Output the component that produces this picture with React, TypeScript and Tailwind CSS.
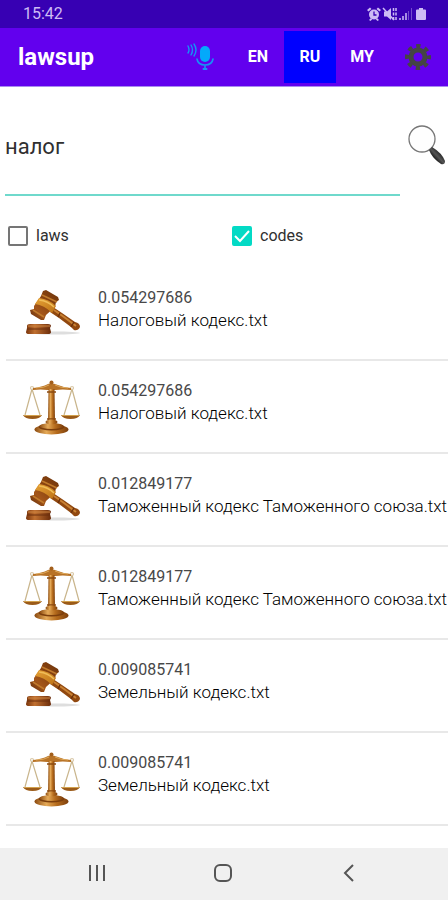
import React, { useState } from "react";

type Result = {
  id: number;
  score: string;
  title: string;
  icon: "gavel" | "scales";
};

const results: Result[] = [
  { id: 1, score: "0.054297686", title: "Налоговый кодекс.txt", icon: "gavel" },
  { id: 2, score: "0.054297686", title: "Налоговый кодекс.txt", icon: "scales" },
  { id: 3, score: "0.012849177", title: "Таможенный кодекс Таможенного союза.txt", icon: "gavel" },
  { id: 4, score: "0.012849177", title: "Таможенный кодекс Таможенного союза.txt", icon: "scales" },
  { id: 5, score: "0.009085741", title: "Земельный кодекс.txt", icon: "gavel" },
  { id: 6, score: "0.009085741", title: "Земельный кодекс.txt", icon: "scales" },
];

const languages = ["EN", "RU", "MY"];

const Gavel = () => (
  <svg viewBox="0 2 60 60" className="size-15 shrink-0" aria-hidden="true">
    <defs>
      <linearGradient id="head" x1="0" y1="1" x2="1" y2="0">
        <stop offset="0" stopColor="#5c2808" />
        <stop offset="0.3" stopColor="#a4561a" />
        <stop offset="0.6" stopColor="#8a430f" />
        <stop offset="1" stopColor="#6b340c" />
      </linearGradient>
      <linearGradient id="band" x1="0" y1="0" x2="1" y2="1">
        <stop offset="0" stopColor="#e5a136" />
        <stop offset="1" stopColor="#bd7216" />
      </linearGradient>
      <linearGradient id="block" x1="0" y1="0" x2="1" y2="0">
        <stop offset="0" stopColor="#7a350c" />
        <stop offset="0.35" stopColor="#c07030" />
        <stop offset="1" stopColor="#6b2c0a" />
      </linearGradient>
    </defs>
    <ellipse cx="32" cy="51" rx="26" ry="1.5" fill="#dedede" />
    <path d="M5 44Q5 42 8 42H26Q29 42 29 44L28 46L29 50Q29 52 26 52H7Q4 52 4 50L5 46Z" fill="url(#block)" />
    <path d="M6 44H28" stroke="#cf8743" strokeWidth="1" />
    <path d="M5 47H28" stroke="#6a2f0c" strokeWidth="1" />
    <path d="M31 25L40 31L53 40Q58 41 58 45Q56 49 52 48L49 45L37 36L28 30Z" fill="#91480f" />
    <path d="M32 28L42 35L54 44" stroke="#c88133" strokeWidth="2" fill="none" />
    <path d="M38 31L36 35M52 40L49 45" stroke="#6b300a" strokeWidth="1.4" />
    <path d="M21 9L24 8L36 15L37 18L34 20L33 25L24 33L22 38L19 38L9 32L8 28L12 27L12 24L19 14Z" fill="url(#head)" />
    <path d="M20 13L35 20M11 28L22 35" stroke="#c07a2c" strokeWidth="1.5" />
    <path d="M17 16Q27 17 34 24L30 31Q22 23 13 22Z" fill="url(#band)" />
    <path d="M17 18Q26 19 32 25" stroke="#f0bd58" strokeWidth="1.5" fill="none" />
  </svg>
);

const Scales = () => (
  <svg viewBox="0 1 60 60" className="size-15 shrink-0" aria-hidden="true">
    <defs>
      <linearGradient id="brass" x1="0" y1="0" x2="1" y2="0">
        <stop offset="0" stopColor="#8b4a10" />
        <stop offset="0.35" stopColor="#e5aa58" />
        <stop offset="0.65" stopColor="#b66c1d" />
        <stop offset="1" stopColor="#7d3f0c" />
      </linearGradient>
    </defs>
    <g fill="none" stroke="#c9b58c" strokeWidth="1.2">
      <path d="M10 13L3 39M10 13L18 39M50 13L42 39M50 13L57 39" />
      <circle cx="10" cy="12" r="1.5" stroke="#d8c8a8" />
      <circle cx="50" cy="12" r="1.5" stroke="#d8c8a8" />
    </g>
    <path d="M11 12Q20 11 26 8L29 7L33 8Q40 11 49 12V14Q40 13 34 14H25Q19 13 11 14Z" fill="#b87327" />
    <path d="M14 12Q22 12 27 9M33 9Q39 12 46 12" stroke="#e6b566" strokeWidth="0.8" fill="none" />
    <circle cx="29.5" cy="6.5" r="2" fill="#a35f1c" />
    <path d="M26.5 13H32.5L33 45H26Z" fill="url(#brass)" />
    <path d="M25 16H34M25 43H34" stroke="#8b4a10" strokeWidth="1.5" />
    <path d="M1 39H20Q18 43 10.5 43Q3 43 1 39Z" fill="#9b5b19" />
    <path d="M39 39H58Q56 43 48.5 43Q41 43 39 39Z" fill="#9b5b19" />
    <path d="M2 39.5H19M40 39.5H57" stroke="#d2a14d" strokeWidth="1" />
    <ellipse cx="29.5" cy="53.5" rx="17" ry="5" fill="url(#brass)" />
    <ellipse cx="29.5" cy="51" rx="13" ry="3.5" fill="#7d3f0c" />
    <ellipse cx="29.5" cy="50" rx="12" ry="3" fill="url(#brass)" />
    <ellipse cx="29.5" cy="46" rx="6" ry="2.5" fill="url(#brass)" />
  </svg>
);

const StatusBar = () => (
  <div className="flex h-7 shrink-0 items-center justify-between bg-[#3700b3] pl-[23px] pr-5 text-[#cdbcf5]">
    <span className="text-base">15:42</span>
    <svg viewBox="0 0 62 16" className="h-4 w-[62px]" fill="currentColor" aria-hidden="true">
      <circle cx="8" cy="8.5" r="5" />
      <path d="M1 4L4 1.5L5.5 3L2.5 5.5ZM15 4L12 1.5L10.5 3L13.5 5.5ZM3 14L5 12L6.5 13L4.5 15ZM13 14L11 12L9.5 13L11.5 15Z" />
      <path d="M8 5.5V9H10.5" fill="none" stroke="#3700b3" strokeWidth="1.3" />
      <path d="M18 5.5H21L25 2V14L21 10.5H18Z" />
      <path d="M17 2L28 14" stroke="currentColor" strokeWidth="1.5" />
      <path d="M27.5 2V14M30 2V14" stroke="currentColor" strokeWidth="1.5" strokeDasharray="3 1.5" />
      <path d="M33 12H35V14H33ZM36 10H38V14H36ZM39 7H41V14H39Z" opacity="0.75" />
      <path d="M42 5H43V14H42ZM45 2H46V14H45Z" opacity="0.4" />
      <path d="M53 2H57V3.5H59Q60 3.5 60 4.5V13Q60 14 59 14H51Q50 14 50 13V4.5Q50 3.5 51 3.5H53Z" />
    </svg>
  </div>
);

const App: React.FC = () => {
  const [language, setLanguage] = useState("RU");
  const [query, setQuery] = useState("налог");
  const [filters, setFilters] = useState<{ [key: string]: boolean }>({ laws: false, codes: true });

  return (
    <div className="flex min-h-screen flex-col overflow-hidden bg-white font-[Roboto,sans-serif] text-[#303030]">
      <StatusBar />

      <header className="flex h-[59px] shrink-0 items-center border-b border-[#a98bf0] bg-[#6200ee] pl-[18px] pr-4 text-white">
        <h1 className="text-2xl font-bold">lawsup</h1>

        <button aria-label="Voice search" className="ml-auto mr-4 cursor-pointer">
          <svg viewBox="0 0 30 30" className="size-[30px]" fill="none" stroke="#1593f5" strokeLinecap="round">
            <rect x="14" y="4" width="10" height="16" rx="5" fill="#04a9fb" stroke="none" />
            <path d="M11 17Q12 23 19 23T27 17M19 23V27" strokeWidth="1.6" />
            <path d="M17.5 27H20.5" strokeWidth="2" />
            <path d="M8 2Q12 8 8 14M5 3Q8 8 5 13M2 4Q4 8 2 11" strokeWidth="1.4" />
          </svg>
        </button>

        {languages.map((lang) => (
          <button
            key={lang}
            onClick={() => setLanguage(lang)}
            className={`h-[52px] w-[52px] cursor-pointer text-base font-bold ${
              lang === language ? "bg-[#0000ff]" : ""
            }`}
          >
            {lang}
          </button>
        ))}

        <button aria-label="Settings" className="ml-4 cursor-pointer">
          <svg viewBox="0 0 28 28" className="size-7" fill="none" stroke="#444444">
            <circle cx="14" cy="14" r="7" strokeWidth="5" />
            <circle cx="14" cy="14" r="11" strokeWidth="4" strokeDasharray="4.320 4.320" strokeDashoffset="2.160" />
          </svg>
        </button>
      </header>

      <form className="flex shrink-0 items-start pl-[5px] pr-0.5" onSubmit={(e) => e.preventDefault()}>
        <input
          type="text"
          aria-label="Search"
          value={query}
          onChange={(e) => setQuery(e.target.value)}
          className="h-[109px] min-w-0 flex-1 border-b-2 border-[#6fd9cc] pb-2 pt-5 text-[22px] outline-none"
        />
        <button aria-label="Find" className="ml-1.5 mt-9 cursor-pointer">
          <svg viewBox="0 0 40 42" className="h-[42px] w-10">
            <defs>
              <linearGradient id="grip" x1="0" y1="1" x2="1" y2="0">
                <stop offset="0.3" stopColor="#111111" />
                <stop offset="0.5" stopColor="#555555" />
                <stop offset="0.7" stopColor="#222222" />
              </linearGradient>
            </defs>
            <circle cx="16" cy="16" r="13" fill="#fefefe" stroke="#777777" strokeWidth="1.3" />
            <path d="M23 27L26 24Q36 30 39 38Q39 42 35 41Q26 35 23 27Z" fill="url(#grip)" />
          </svg>
        </button>
      </form>

      <div className="flex h-18 shrink-0 items-start pt-[30px]">
        {Object.keys(filters).map((name) => (
          <label key={name} className="flex w-1/2 cursor-pointer items-center gap-2 pl-2 text-base leading-5">
            <span className="relative flex size-5">
              <input
                type="checkbox"
                checked={filters[name]}
                onChange={(e) => setFilters({ ...filters, [name]: e.target.checked })}
                className="peer size-5 appearance-none rounded-xs border-2 border-[#757575] checked:border-[#03dac5] checked:bg-[#03dac5]"
              />
              <svg
                viewBox="0 0 20 20"
                className="pointer-events-none absolute inset-0 hidden size-5 peer-checked:block"
                fill="none"
                stroke="white"
                strokeWidth="2"
              >
                <path d="M3 10L8 15L17 5" />
              </svg>
            </span>
            {name}
          </label>
        ))}
      </div>

      <ul className="flex-1 pl-1.5">
        {results.map((result) => (
          <li key={result.id} className="flex h-[93px] items-start gap-4 border-b-2 border-[#e8e8e8] pl-4">
            <div className="pt-4">{result.icon === "gavel" ? <Gavel /> : <Scales />}</div>
            <div className="whitespace-nowrap pt-[18px]">
              <p className="text-base leading-[23px] text-[#484848]">{result.score}</p>
              <p className="text-[17px] font-light leading-[23px] text-black">{result.title}</p>
            </div>
          </li>
        ))}
      </ul>

      <nav className="flex h-[52px] shrink-0 items-center justify-center gap-[102px] bg-[#f0f0f0] pb-0.5 pr-0.5 text-[#555555]">
        <button aria-label="Recent apps" className="cursor-pointer">
          <svg viewBox="0 0 24 24" className="size-6" fill="none" stroke="currentColor" strokeWidth="2">
            <path d="M5 4V20M12 4V20M19 4V20" />
          </svg>
        </button>
        <button aria-label="Home" className="cursor-pointer">
          <svg viewBox="0 0 24 24" className="size-6" fill="none" stroke="currentColor" strokeWidth="2">
            <rect x="4" y="4" width="16" height="16" rx="5" />
          </svg>
        </button>
        <button aria-label="Back" className="cursor-pointer">
          <svg viewBox="0 0 24 24" className="size-6" fill="none" stroke="currentColor" strokeWidth="2">
            <path d="M16 4L8 12L16 20" />
          </svg>
        </button>
      </nav>
    </div>
  );
};

export default App;
